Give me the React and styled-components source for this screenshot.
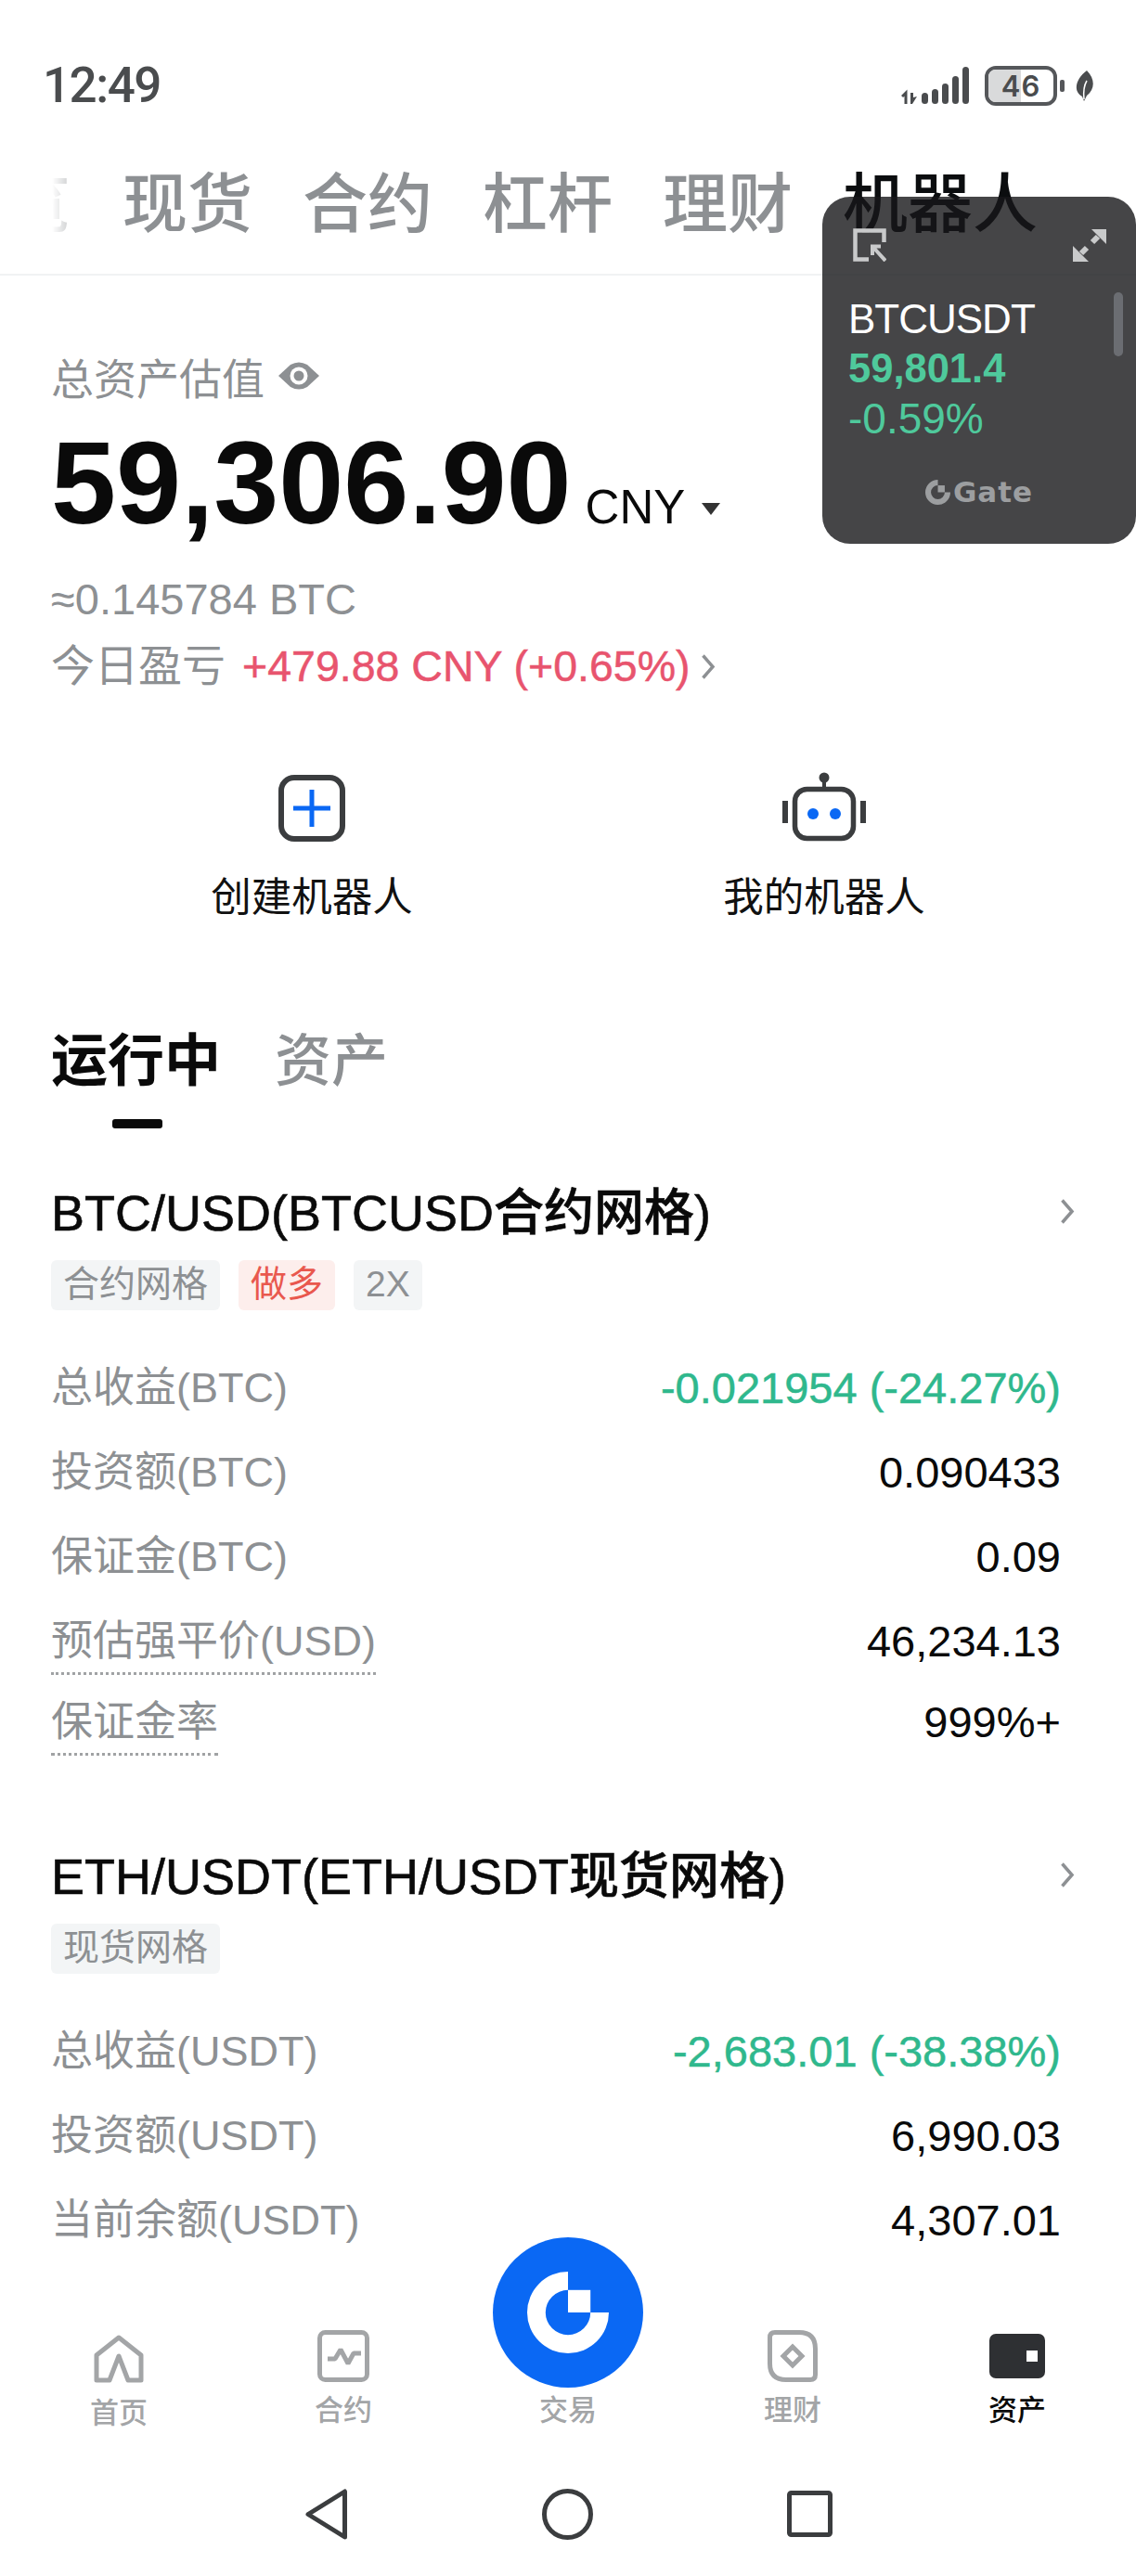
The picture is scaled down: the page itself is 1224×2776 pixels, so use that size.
import React from 'react';
import styled, { createGlobalStyle } from 'styled-components';

const SANS = '"Liberation Sans", "Noto Sans CJK SC", sans-serif';
const GREY = '#8d9093';
const GREEN = '#2fb88d';
const ICON = '#3b3d3f';
const BLUE = '#0a68f4';

const GlobalStyle = createGlobalStyle`
  html, body { margin: 0; padding: 0; background: #fff; }
  * { box-sizing: border-box; }
`;

const rows1 = [
  { label: '总收益(BTC)', value: '-0.021954 (-24.27%)', up: true },
  { label: '投资额(BTC)', value: '0.090433' },
  { label: '保证金(BTC)', value: '0.09' },
  { label: '预估强平价(USD)', value: '46,234.13', dotted: true },
  { label: '保证金率', value: '999%+', dotted: true },
];

const rows2 = [
  { label: '总收益(USDT)', value: '-2,683.01 (-38.38%)', up: true },
  { label: '投资额(USDT)', value: '6,990.03' },
  { label: '当前余额(USDT)', value: '4,307.01' },
];

const navItems = [
  { label: '首页', icon: <HomeIcon />, low: true },
  { label: '合约', icon: <FuturesIcon /> },
  { label: '交易', center: true },
  { label: '理财', icon: <EarnIcon /> },
  { label: '资产', icon: <WalletIcon />, active: true },
];

function HomeIcon() {
  return (
    <svg width="56" height="54" viewBox="0 0 56 54" fill="none" stroke="#a3a5a7" strokeWidth="5" strokeLinejoin="round">
      <path d="M4 22 L28 3 L52 22 V49 H38 L28 23 L18 49 H4 Z" />
    </svg>
  );
}

function FuturesIcon() {
  return (
    <svg width="56" height="56" viewBox="0 0 56 56" fill="none">
      <rect x="2.5" y="2.5" width="51" height="51" rx="6" stroke="#a3a5a7" strokeWidth="5" />
      <path d="M11 31 H19 L25 21 L33 36 L39 25 H47" stroke="#a3a5a7" strokeWidth="5" strokeLinejoin="bevel" />
    </svg>
  );
}

function EarnIcon() {
  return (
    <svg width="54" height="56" viewBox="0 0 54 56" fill="none" stroke="#a3a5a7" strokeWidth="5">
      <path d="M2.5 8 Q2.5 2.5 8 2.5 H34 Q51.5 2.5 51.5 20 V48 Q51.5 53.5 46 53.5 H20 Q2.5 53.5 2.5 36 Z" />
      <path d="M27 18 L37 28 L27 38 L17 28 Z" />
    </svg>
  );
}

function WalletIcon() {
  return (
    <svg width="60" height="52" viewBox="0 0 60 52">
      <rect width="60" height="48" rx="7" fill="#2e3033" />
      <rect x="40" y="18" width="12" height="12" fill="#fff" />
    </svg>
  );
}

const GateMark = ({ size, color }) => (
  <svg width={size} height={size} viewBox="0 0 100 100" fill={color}>
    <path d="M50 0 A50 50 0 1 0 100 50 H77.5 A27.5 27.5 0 1 1 50 22.5 Z" />
    <rect x="50" y="22.5" width="27.5" height="27.5" />
  </svg>
);

const Chevron = () => (
  <svg width="16" height="27" viewBox="0 0 16 27" fill="none" stroke={GREY} strokeWidth="3.5">
    <path d="M2.5 1.5 L13 13.5 L2.5 25.5" />
  </svg>
);

export default function App() {
  return (
    <Phone>
      <GlobalStyle />
      <StatusBar>
        <Clock>12:49</Clock>
        <StatusIcons>
          <svg width="73" height="42" viewBox="0 0 73 42" fill="#4a4c4e">
            <path d="M1 33 L5 29 V41" fill="none" stroke="#4a4c4e" strokeWidth="3" />
            <path d="M10 29 h3 v5 l4 -1 l-5 8 h-2 z" />
            <rect x="22" y="29" width="7" height="12" rx="3.5" />
            <rect x="33" y="25" width="7" height="16" rx="3.5" />
            <rect x="44" y="19" width="7" height="22" rx="3.5" />
            <rect x="55" y="11" width="7" height="30" rx="3.5" />
            <rect x="66" y="1" width="7" height="40" rx="3.5" />
          </svg>
          <Battery>
            <BatteryFill />
            <BatteryLabel>46</BatteryLabel>
          </Battery>
          <BatteryCap />
          <svg width="20" height="33" viewBox="0 0 20 33" fill="none">
            <path d="M13 0 C22 9 22 20 13 27 L10 33 L8 28 C-3 22 2 8 13 0 Z" fill="#4a4c4e" />
            <path d="M10 31 C9 22 10 16 13 11" stroke="#fff" strokeWidth="1.5" />
          </svg>
        </StatusIcons>
      </StatusBar>

      <TopTabs>
        <ClippedTab>
          <span>览</span>
        </ClippedTab>
        <TopTab>现货</TopTab>
        <TopTab>合约</TopTab>
        <TopTab>杠杆</TopTab>
        <TopTab>理财</TopTab>
        <TopTab $active>机器人</TopTab>
      </TopTabs>

      <Ticker>
        <TickerIcons>
          <svg width="36" height="36" viewBox="0 0 36 36" fill="none" stroke="#c9cacb" strokeWidth="4.5">
            <path d="M17 33.5 H2.5 V2.5 H33.5 V15" />
            <path d="M30 19.5 H21 V29 M21 19.5 L35 35" strokeWidth="4" />
          </svg>
          <svg width="36" height="36" viewBox="0 0 36 36" fill="#c9cacb">
            <path d="M20 1 H36 V17 Z" />
            <path d="M0 19 V36 H17 Z" />
            <path d="M27 9 L21 15 M15 21 L9 27" stroke="#c9cacb" strokeWidth="6" />
          </svg>
        </TickerIcons>
        <TickerName>BTCUSDT</TickerName>
        <TickerPrice>59,801.4</TickerPrice>
        <TickerChange>-0.59%</TickerChange>
        <TickerBrand>
          <GateMark size={27} color="#9c9ea0" />
          <span>Gate</span>
        </TickerBrand>
        <TickerScroll />
      </Ticker>

      <Content>
        <Summary>
          <SummaryLabel>
            总资产估值
            <svg width="46" height="30" viewBox="0 0 46 30">
              <path d="M1 15 L14 3 Q23 -2 32 3 L45 15 L32 27 Q23 32 14 27 Z" fill={GREY} />
              <circle cx="23" cy="15" r="9.5" fill="#fff" />
              <circle cx="23" cy="15" r="5.5" fill={GREY} />
            </svg>
          </SummaryLabel>
          <BalanceRow>
            <Balance>59,306.90</Balance>
            <Currency>CNY</Currency>
            <Caret />
          </BalanceRow>
          <BtcValue>≈0.145784 BTC</BtcValue>
          <PnlRow>
            今日盈亏
            <PnlValue>+479.88 CNY (+0.65%)</PnlValue>
            <Chevron />
          </PnlRow>
        </Summary>

        <Actions>
          <Action>
            <ActionIcon>
              <svg width="72" height="72" viewBox="0 0 72 72" fill="none">
                <rect x="3" y="3" width="66" height="66" rx="14" stroke={ICON} strokeWidth="6" />
                <path d="M36 16 V56 M16 36 H56" stroke={BLUE} strokeWidth="5" />
              </svg>
            </ActionIcon>
            <ActionLabel>创建机器人</ActionLabel>
          </Action>
          <Action>
            <ActionIcon>
              <svg width="90" height="76" viewBox="0 0 90 76" fill="none">
                <path d="M45 8 V18" stroke={ICON} strokeWidth="4" />
                <circle cx="45" cy="7" r="5.5" fill={ICON} />
                <rect x="13.5" y="19.5" width="63" height="53" rx="13" stroke={ICON} strokeWidth="5.5" />
                <rect x="0" y="32" width="6" height="24" fill={ICON} />
                <rect x="84" y="32" width="6" height="24" fill={ICON} />
                <circle cx="33" cy="46" r="6" fill={BLUE} />
                <circle cx="57" cy="46" r="6" fill={BLUE} />
              </svg>
            </ActionIcon>
            <ActionLabel>我的机器人</ActionLabel>
          </Action>
        </Actions>

        <SectionTabs>
          <SectionTab $active>运行中</SectionTab>
          <SectionTab>资产</SectionTab>
        </SectionTabs>

        <GridCard>
          <CardHead>
            <CardTitle>BTC/USD(BTCUSD合约网格)</CardTitle>
            <Chevron />
          </CardHead>
          <Tags>
            <Tag>合约网格</Tag>
            <Tag $red>做多</Tag>
            <Tag>2X</Tag>
          </Tags>
          <Rows>
            {rows1.map((r) => (
              <Row key={r.label} $dotted={r.dotted}>
                <RowLabel $dotted={r.dotted}>{r.label}</RowLabel>
                <RowValue $up={r.up}>{r.value}</RowValue>
              </Row>
            ))}
          </Rows>
        </GridCard>

        <GridCard>
          <CardHead>
            <CardTitle>ETH/USDT(ETH/USDT现货网格)</CardTitle>
            <Chevron />
          </CardHead>
          <Tags>
            <Tag>现货网格</Tag>
          </Tags>
          <Rows>
            {rows2.map((r) => (
              <Row key={r.label}>
                <RowLabel>{r.label}</RowLabel>
                <RowValue $up={r.up}>{r.value}</RowValue>
              </Row>
            ))}
          </Rows>
        </GridCard>
      </Content>

      <BottomNav>
        {navItems.map((item) => (
          <NavItem key={item.label} $low={item.low}>
            {item.center ? (
              <CenterButton>
                <GateMark size={88} color="#fff" />
              </CenterButton>
            ) : (
              <NavIcon>{item.icon}</NavIcon>
            )}
            <NavLabel $active={item.active}>{item.label}</NavLabel>
          </NavItem>
        ))}
      </BottomNav>

      <SystemBar>
        <svg width="47" height="55" viewBox="0 0 47 55" fill="none" stroke={ICON} strokeWidth="5" strokeLinejoin="round">
          <path d="M43.5 3 V52 L4 27.5 Z" />
        </svg>
        <svg width="55" height="55" viewBox="0 0 55 55" fill="none" stroke={ICON} strokeWidth="5">
          <circle cx="27.5" cy="27.5" r="25" />
        </svg>
        <svg width="49" height="50" viewBox="0 0 49 50" fill="none" stroke={ICON} strokeWidth="5">
          <rect x="2.5" y="2.5" width="44" height="45" rx="2" />
        </svg>
      </SystemBar>
    </Phone>
  );
}

const Phone = styled.div`
  position: relative;
  width: 1224px;
  height: 2776px;
  display: flex;
  flex-direction: column;
  overflow: hidden;
  background: #fff;
  font-family: ${SANS};
`;

const StatusBar = styled.div`
  height: 160px;
  padding: 24px 46px 0 46px;
  display: flex;
  justify-content: space-between;
  align-items: center;
  flex: none;
`;

const Clock = styled.div`
  font-family: Roboto, ${SANS};
  font-size: 53px;
  font-weight: 500;
  letter-spacing: -1.5px;
  color: #4a4c4e;
`;

const StatusIcons = styled.div`
  display: flex;
  align-items: center;
  gap: 3px;
`;

const Battery = styled.div`
  position: relative;
  width: 78px;
  height: 43px;
  margin-left: 14px;
  border: 4px solid #55575a;
  border-radius: 12px;
  overflow: hidden;
  display: flex;
  align-items: center;
  justify-content: center;
`;

const BatteryFill = styled.div`
  position: absolute;
  left: 0;
  top: 0;
  bottom: 0;
  width: 50%;
  background: #d9dadb;
`;

const BatteryLabel = styled.span`
  position: relative;
  font-family: Inter, ${SANS};
  font-size: 31px;
  font-weight: 600;
  letter-spacing: 1px;
  color: #4a4c4e;
`;

const BatteryCap = styled.div`
  width: 5px;
  height: 13px;
  margin-right: 8px;
  border-radius: 2px;
  background: #55575a;
`;

const TopTabs = styled.div`
  height: 137px;
  padding: 0 0 14px 56px;
  display: flex;
  align-items: center;
  border-bottom: 2px solid #f1f2f3;
  flex: none;
`;

const ClippedTab = styled.div`
  width: 20px;
  margin-right: 56px;
  display: flex;
  justify-content: flex-end;
  overflow: hidden;
  font-size: 70px;
  font-weight: 500;
  line-height: 1.2;
  color: ${GREY};
  opacity: 0.45;
  mask-image: linear-gradient(90deg, transparent, #000);
  span {
    flex: none;
  }
`;

const TopTab = styled.div`
  font-size: 70px;
  font-weight: 500;
  line-height: 1.2;
  margin-right: 54px;
  white-space: nowrap;
  color: ${(p) => (p.$active ? '#0b0d0f' : GREY)};
`;

const Ticker = styled.div`
  position: absolute;
  top: 212px;
  right: 0;
  width: 338px;
  height: 374px;
  padding: 34px 28px;
  border-radius: 30px;
  background: rgba(22, 23, 25, 0.8);
`;

const TickerIcons = styled.div`
  display: flex;
  justify-content: space-between;
  padding: 0 4px 0 5px;
  margin-bottom: 35px;
`;

const TickerName = styled.div`
  font-size: 44px;
  line-height: 54px;
  color: #fff;
  letter-spacing: -1px;
`;

const TickerPrice = styled.div`
  font-size: 43.5px;
  font-weight: 700;
  line-height: 53px;
  color: #4fc99c;
`;

const TickerChange = styled(TickerPrice)`
  font-weight: 400;
  font-size: 46px;
  line-height: 55px;
`;

const TickerBrand = styled.div`
  margin-top: 33px;
  display: flex;
  align-items: center;
  justify-content: center;
  gap: 3px;
  font-family: "DejaVu Sans", ${SANS};
  font-size: 31px;
  font-weight: 700;
  letter-spacing: 1px;
  line-height: 36px;
  color: #9c9ea0;
`;

const TickerScroll = styled.div`
  position: absolute;
  right: 14px;
  top: 103px;
  width: 10px;
  height: 69px;
  border-radius: 5px;
  background: #6b6d72;
`;

const Content = styled.div`
  flex: 1;
  min-height: 0;
  padding: 0 55px;
`;

const Summary = styled.div`
  padding-top: 84px;
`;

const SummaryLabel = styled.div`
  display: flex;
  align-items: center;
  gap: 14px;
  height: 48px;
  font-size: 46px;
  color: ${GREY};
`;

const BalanceRow = styled.div`
  display: flex;
  align-items: baseline;
  margin-top: 26px;
`;

const Balance = styled.div`
  font-size: 126px;
  font-weight: 700;
  line-height: 132px;
  color: #0a0a0a;
`;

const Currency = styled.span`
  font-size: 51px;
  margin-left: 15px;
  color: #0a0a0a;
`;

const Caret = styled.span`
  margin-left: 18px;
  width: 0;
  height: 0;
  border-left: 10px solid transparent;
  border-right: 10px solid transparent;
  border-top: 13px solid #333;
  align-self: center;
  margin-top: 54px;
`;

const BtcValue = styled.div`
  margin-top: 31px;
  font-size: 47px;
  line-height: 56px;
  color: ${GREY};
`;

const PnlRow = styled.div`
  display: flex;
  align-items: center;
  margin-top: 15px;
  font-size: 47px;
  line-height: 58px;
  color: ${GREY};
`;

const PnlValue = styled.span`
  margin-left: 18px;
  margin-right: 11px;
  font-size: 46.5px;
  -webkit-text-stroke: 0.5px #e8546e;
  color: #e8546e;
`;

const Actions = styled.div`
  display: grid;
  grid-template-columns: 552px 552px;
  margin: 84px 0 0 5px;
`;

const Action = styled.div`
  display: flex;
  flex-direction: column;
  align-items: center;
  gap: 34px;
`;

const ActionIcon = styled.div`
  height: 76px;
  display: flex;
  align-items: flex-end;
`;

const ActionLabel = styled.div`
  font-size: 43.5px;
  line-height: 52px;
  color: #111;
`;

const SectionTabs = styled.div`
  display: flex;
  gap: 58px;
  margin-top: 116px;
  height: 162px;
`;

const SectionTab = styled.div`
  position: relative;
  height: 70px;
  font-size: 61px;
  font-weight: ${(p) => (p.$active ? 700 : 500)};
  line-height: 70px;
  color: ${(p) => (p.$active ? '#0a0a0a' : GREY)};
  ${(p) =>
    p.$active &&
    `&::after {
      content: '';
      position: absolute;
      left: 66px;
      top: 97px;
      width: 54px;
      height: 10px;
      border-radius: 3px;
      background: #0a0a0a;
    }`}
`;

const GridCard = styled.div`
  margin-bottom: 71px;
`;

const CardHead = styled.div`
  display: flex;
  align-items: center;
  justify-content: space-between;
  height: 62px;
  padding-right: 11px;
  svg {
    margin-top: 7px;
  }
`;

const CardTitle = styled.div`
  font-size: 54px;
  font-weight: 500;
  color: #0a0a0a;
  -webkit-text-stroke: 0.6px #0a0a0a;
`;

const Tags = styled.div`
  display: flex;
  gap: 20px;
  margin-top: 25px;
`;

const Tag = styled.div`
  height: 54px;
  padding: 0 13px;
  border-radius: 6px;
  font-size: 39px;
  line-height: 52px;
  background: ${(p) => (p.$red ? '#fdeeec' : '#f3f5f6')};
  color: ${(p) => (p.$red ? '#e9584e' : GREY)};
`;

const Rows = styled.div`
  margin-top: 56px;
  padding-right: 26px;
`;

const Row = styled.div`
  display: flex;
  justify-content: space-between;
  align-items: flex-start;
  height: ${(p) => (p.$dotted ? 87 : 91)}px;
`;

const RowLabel = styled.div`
  font-size: 45px;
  line-height: 56px;
  color: ${GREY};
  ${(p) => p.$dotted && `padding-bottom: 5px; border-bottom: 3px dotted #a0a2a4;`}
`;

const RowValue = styled.div`
  font-size: 47px;
  line-height: 56px;
  color: ${(p) => (p.$up ? GREEN : '#0a0a0a')};
  ${(p) => p.$up && `-webkit-text-stroke: 0.5px ${GREEN};`}
`;

const BottomNav = styled.div`
  flex: none;
  height: 210px;
  display: grid;
  grid-template-columns: repeat(5, 242px);
  grid-template-rows: 210px;
  padding-left: 7px;
  position: relative;
`;

const NavItem = styled.div`
  display: flex;
  flex-direction: column;
  align-items: center;
  justify-content: flex-end;
  padding-bottom: ${(p) => (p.$low ? 5 : 8)}px;
`;

const NavIcon = styled.div`
  height: 60px;
  display: flex;
  align-items: flex-end;
  margin-bottom: 11px;
`;

const NavLabel = styled.div`
  font-size: 31px;
  line-height: 40px;
  font-weight: 500;
  color: ${(p) => (p.$active ? '#0a0a0a' : '#a3a5a7')};
`;

const CenterButton = styled.div`
  flex: none;
  width: 162px;
  height: 162px;
  border-radius: 50%;
  background: ${BLUE};
  display: flex;
  align-items: center;
  justify-content: center;
  margin-bottom: 5px;
`;

const SystemBar = styled.div`
  flex: none;
  height: 150px;
  display: flex;
  justify-content: center;
  align-items: center;
  gap: 209px;
  padding-top: 16px;
`;
